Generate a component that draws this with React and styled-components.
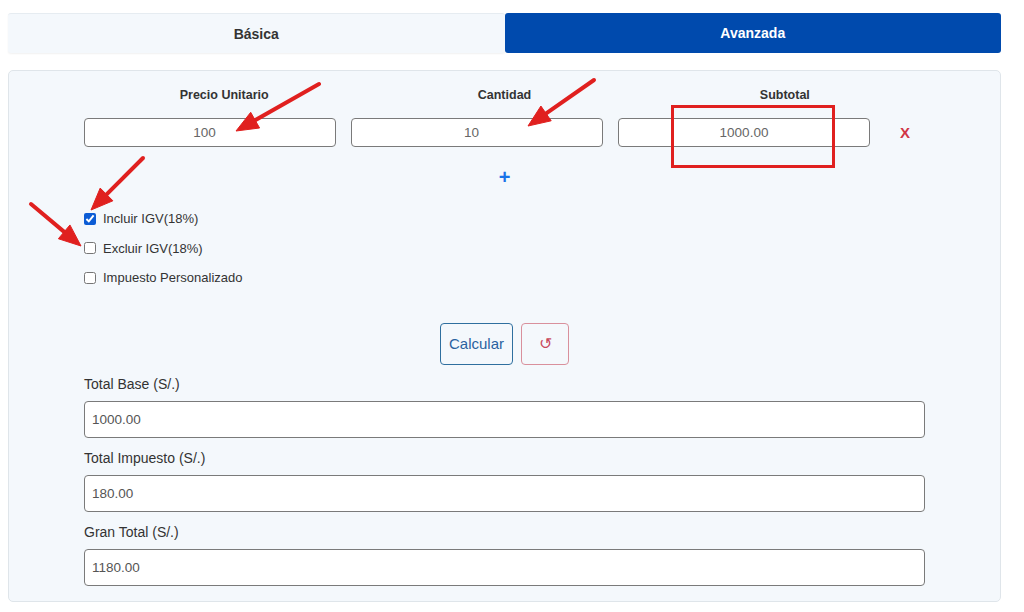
import React, { useState } from "react";
import styled, { createGlobalStyle } from "styled-components";

const GlobalStyle = createGlobalStyle`
  body {
    margin: 0;
    background: #ffffff;
    font-family: "Liberation Sans", Arial, sans-serif;
  }
  * { box-sizing: border-box; }
`;

const Page = styled.div`
  position: relative;
  width: 1024px;
  height: 612px;
  padding: 13px 23px 0 8px;
  overflow: hidden;
`;

const Tabs = styled.div`
  display: flex;
  height: 40px;
`;

const Tab = styled.button`
  flex: 1;
  border: none;
  border-radius: 3px;
  font-family: inherit;
  font-size: 14px;
  font-weight: bold;
  cursor: pointer;
  background: ${(p) => (p.$active ? "#004aad" : "#f4f8fc")};
  color: ${(p) => (p.$active ? "#ffffff" : "#333333")};
  box-shadow: ${(p) => (p.$active ? "none" : "0 1px 2px rgba(0,0,0,0.06)")};
  border-top: ${(p) => (p.$active ? "none" : "1px solid #e6ecf1")};
`;

const Panel = styled.div`
  margin-top: 17px;
  background: #f4f8fc;
  border: 1px solid #dfe5ea;
  border-radius: 5px;
  padding: 17px 0 15px;
`;

const Content = styled.div`
  width: 841px;
  margin: 0 auto;
`;

const HeaderRow = styled.div`
  display: grid;
  grid-template-columns: repeat(3, 1fr);
  height: 15px;
  margin-bottom: 15px;
`;

const HeaderLabel = styled.div`
  text-align: center;
  font-size: 12.5px;
  font-weight: bold;
  color: #333;
  line-height: 15px;
`;

const ItemRow = styled.div`
  display: flex;
  align-items: center;
  gap: 15px;
`;

const ItemInput = styled.input`
  width: 252px;
  height: 29px;
  border: 1px solid #7a7a7a;
  border-radius: 4px;
  background: #fff;
  text-align: center;
  padding: 0 ${(p) => (p.$spin ? 12 : 1)}px 0 1px;
  font-family: inherit;
  font-size: 13.5px;
  color: #666;
  outline: none;
`;

const RemoveButton = styled.button`
  width: 40px;
  border: none;
  background: transparent;
  color: #d03545;
  font-family: inherit;
  font-weight: bold;
  font-size: 15px;
  padding: 0;
  cursor: pointer;
`;

const AddButton = styled.button`
  display: block;
  margin: 20px auto 0;
  height: 20px;
  border: none;
  background: transparent;
  color: #1a73e8;
  font-family: inherit;
  font-weight: bold;
  font-size: 20px;
  line-height: 20px;
  padding: 0;
  cursor: pointer;
`;

const CheckList = styled.div`
  margin-top: 17px;
  display: flex;
  flex-direction: column;
`;

const CheckRow = styled.label`
  display: flex;
  align-items: center;
  gap: 7px;
  height: 29.5px;
  font-size: 13px;
  color: #333;
`;

const Check = styled.input`
  margin: 0;
  width: 12px;
  height: 12px;
  accent-color: #0b5cd5;
`;

const Actions = styled.div`
  display: flex;
  justify-content: center;
  gap: 8px;
  margin-top: 30px;
  margin-bottom: 10px;
`;

const OutlineButton = styled.button`
  height: 42px;
  width: ${(p) => p.$w}px;
  border: 1px solid ${(p) => p.$border};
  border-radius: 4px;
  background: transparent;
  color: ${(p) => p.$color};
  font-family: inherit;
  font-size: ${(p) => p.$size}px;
  cursor: pointer;
  padding: 0;
`;

const Field = styled.div`
  margin-bottom: 11px;

  &:last-child {
    margin-bottom: 0;
  }
`;

const FieldLabel = styled.div`
  font-size: 14px;
  line-height: 18px;
  color: #333;
  margin-bottom: 8px;
`;

const FieldInput = styled.input`
  width: 100%;
  height: 37px;
  border: 1px solid #7a7a7a;
  border-radius: 4px;
  background: #fff;
  padding: 0 7px;
  font-family: inherit;
  font-size: 13.5px;
  color: #555;
  outline: none;
`;

const Overlay = styled.svg`
  position: absolute;
  left: 0;
  top: 0;
  pointer-events: none;
`;

function Arrow({ x1, y1, x2, y2 }) {
  const dx = x2 - x1;
  const dy = y2 - y1;
  const len = Math.hypot(dx, dy);
  const ux = dx / len;
  const uy = dy / len;
  const headLen = 22;
  const headW = 9;
  const bx = x2 - ux * headLen;
  const by = y2 - uy * headLen;
  const pts = [
    [x2, y2],
    [bx - uy * headW, by + ux * headW],
    [bx + uy * headW, by - ux * headW],
  ]
    .map((p) => p.join(","))
    .join(" ");
  return (
    <g fill="#e0201f" stroke="#e0201f">
      <line x1={x1} y1={y1} x2={bx + ux * 2} y2={by + uy * 2} strokeWidth="4" strokeLinecap="round" />
      <polygon points={pts} strokeWidth="1" strokeLinejoin="round" />
    </g>
  );
}

export default function App() {
  const [tab, setTab] = useState("avanzada");
  const [checks, setChecks] = useState({ incluir: true, excluir: false, personal: false });

  const toggle = (key) => setChecks({ ...checks, [key]: !checks[key] });

  return (
    <Page>
      <GlobalStyle />
      <Tabs>
        <Tab $active={tab === "basica"} onClick={() => setTab("basica")}>Básica</Tab>
        <Tab $active={tab === "avanzada"} onClick={() => setTab("avanzada")}>Avanzada</Tab>
      </Tabs>

      <Panel>
        <Content>
          <HeaderRow>
            <HeaderLabel>Precio Unitario</HeaderLabel>
            <HeaderLabel>Cantidad</HeaderLabel>
            <HeaderLabel>Subtotal</HeaderLabel>
          </HeaderRow>
          <ItemRow>
            <ItemInput $spin defaultValue="100" />
            <ItemInput $spin defaultValue="10" />
            <ItemInput defaultValue="1000.00" readOnly />
            <RemoveButton>X</RemoveButton>
          </ItemRow>
          <AddButton>+</AddButton>

          <CheckList>
            <CheckRow>
              <Check type="checkbox" checked={checks.incluir} onChange={() => toggle("incluir")} />
              Incluir IGV(18%)
            </CheckRow>
            <CheckRow>
              <Check type="checkbox" checked={checks.excluir} onChange={() => toggle("excluir")} />
              Excluir IGV(18%)
            </CheckRow>
            <CheckRow>
              <Check type="checkbox" checked={checks.personal} onChange={() => toggle("personal")} />
              Impuesto Personalizado
            </CheckRow>
          </CheckList>

          <Actions>
            <OutlineButton $w={73} $border="#2f6f9f" $color="#2a62a0" $size={15}>Calcular</OutlineButton>
            <OutlineButton $w={48} $border="#d9909c" $color="#c94a5c" $size={16}>↺</OutlineButton>
          </Actions>

          <Field>
            <FieldLabel>Total Base (S/.)</FieldLabel>
            <FieldInput defaultValue="1000.00" readOnly />
          </Field>
          <Field>
            <FieldLabel>Total Impuesto (S/.)</FieldLabel>
            <FieldInput defaultValue="180.00" readOnly />
          </Field>
          <Field>
            <FieldLabel>Gran Total (S/.)</FieldLabel>
            <FieldInput defaultValue="1180.00" readOnly />
          </Field>
        </Content>
      </Panel>

      <Overlay width="1024" height="612" viewBox="0 0 1024 612">
        <Arrow x1={319} y1={84} x2={236} y2={131} />
        <Arrow x1={594} y1={80} x2={528} y2={126} />
        <Arrow x1={143} y1={158} x2={91} y2={210} />
        <Arrow x1={31} y1={204} x2={81} y2={246} />
        <rect x="672.5" y="106.5" width="161" height="60" fill="none" stroke="#e0201f" strokeWidth="3" />
      </Overlay>
    </Page>
  );
}
